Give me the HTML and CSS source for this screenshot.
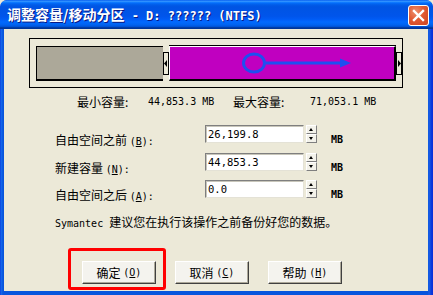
FILE: index.html
```html
<!DOCTYPE html>
<html>
<head>
<meta charset="utf-8">
<link rel="stylesheet" href="styles.css">
</head>
<body>
<div class="win">
  <div class="titlebar">
    <span class="title">调整容量/移动分区<span class="tlat"> - D: ?????? (NTFS)</span></span>
    <div class="close">
      <svg width="13" height="13" viewBox="0 0 13 13"><path d="M2 2 L11 11 M11 2 L2 11" stroke="#fff" stroke-width="2.4" stroke-linecap="square"/></svg>
    </div>
  </div>
  <div class="client">
    <div class="map">
      <div class="bar">
        <div class="free"></div>
        <div class="grip">
          <svg width="6" height="23" viewBox="0 0 6 23"><rect x="0.5" y="0.5" width="5" height="22" fill="#ECE9D8" stroke="#000"/><polygon points="1,11.5 4,8 4,15" fill="#000"/></svg>
        </div>
        <div class="part">
          <svg class="move" width="225" height="32" viewBox="0 0 225 32">
            <ellipse cx="84" cy="16" rx="10.5" ry="9" fill="none" stroke="#1E4FF0" stroke-width="3"/>
            <line x1="96" y1="16" x2="172" y2="16" stroke="#1E4FF0" stroke-width="3"/>
            <polygon points="170,11.5 181,16 170,20.5" fill="#1E4FF0"/>
          </svg>
        </div>
        <div class="grip">
          <svg width="6" height="23" viewBox="0 0 6 23"><rect x="0.5" y="0.5" width="5" height="22" fill="#ECE9D8" stroke="#000"/><polygon points="5,11.5 2,8 2,15" fill="#000"/></svg>
        </div>
      </div>
    </div>

    <div class="sizes">
      <span>最小容量:</span><span class="lat">44,853.3 MB</span>
      <span>最大容量:</span><span class="lat">71,053.1 MB</span>
    </div>

    <div class="form">
      <div class="row">
        <label class="lbl">自由空间之前 <span class="lat">(<u>B</u>):</span></label>
        <div class="field lat">26,199.8</div>
        <div class="spin"><span class="up"></span><span class="down"></span></div>
        <span class="unit lat">MB</span>
      </div>
      <div class="row">
        <label class="lbl">新建容量 <span class="lat">(<u>N</u>):</span></label>
        <div class="field lat">44,853.3</div>
        <div class="spin"><span class="up"></span><span class="down"></span></div>
        <span class="unit lat">MB</span>
      </div>
      <div class="row">
        <label class="lbl">自由空间之后 <span class="lat">(<u>A</u>):</span></label>
        <div class="field lat">0.0</div>
        <div class="spin"><span class="up"></span><span class="down"></span></div>
        <span class="unit lat">MB</span>
      </div>
    </div>

    <p class="note"><span class="lat">Symantec </span>建议您在执行该操作之前备份好您的数据。</p>

    <div class="buttons">
      <div class="btn">确定 <span class="lat">(<u>O</u>)</span></div>
      <div class="btn">取消 <span class="lat">(<u>C</u>)</span></div>
      <div class="btn">帮助 <span class="lat">(<u>H</u>)</span></div>
    </div>

    <div class="highlight"></div>
  </div>
</div>
</body>
</html>
```

FILE: styles.css
```css
* { box-sizing: border-box; }
html, body { margin: 0; padding: 0; }
body {
  width: 433px;
  height: 295px;
  overflow: hidden;
  background: #ECE9D8;
  font-family: "Noto Sans CJK SC", "Liberation Sans", sans-serif;
  font-size: 12px;
  color: #000;
}
.lat {
  font-family: "DejaVu Sans Mono", "Noto Sans CJK SC", monospace;
  font-size: 10px;
}
.win {
  width: 433px;
  height: 295px;
  display: flex;
  flex-direction: column;
  background: linear-gradient(to right, #0831D9 0, #166AEE 1px, #0855DD 3px, #0855DD 428px, #1A5FE6 429px, #0831D9 432px);
  border-radius: 7px 7px 0 0;
  overflow: hidden;
}
.titlebar {
  height: 29px;
  flex: none;
  display: flex;
  align-items: center;
  justify-content: space-between;
  padding: 0 4px 0 7px;
  background: linear-gradient(to bottom, #0058EE 0%, #3593FF 4%, #288EFF 6%, #127DFF 8%, #036FFC 10%, #0262EE 14%, #0057E5 20%, #0054E3 24%, #0055EB 56%, #005BF5 66%, #026AFE 76%, #0062EF 86%, #0052D6 92%, #0040AB 94%, #003092 100%);
  border-radius: 7px 7px 0 0;
}
.title {
  color: #fff;
  font-weight: bold;
  font-size: 14px;
  line-height: 16px;
  text-shadow: 1px 1px 0 #0A1883;
  white-space: pre;
}
.tlat {
  font-family: "DejaVu Sans Mono", monospace;
  font-size: 12px;
  font-weight: bold;
}
.close {
  width: 21px;
  height: 21px;
  margin-top: 1px;
  border: 1px solid #fff;
  border-radius: 3px;
  background: radial-gradient(circle at 35% 30%, #EE906F 0%, #E15A33 45%, #CC4421 100%);
  display: flex;
  align-items: center;
  justify-content: center;
}
.close svg { display: block; }
.client {
  flex: 1;
  margin: 0 5px 4px 4px;
  background: #ECE9D8;
  position: relative;
  overflow: hidden;
}
.map {
  margin: 9px 0 0 25px;
  width: 374px;
  height: 50px;
  border: 1px solid #000;
  padding: 7px 0 0 6px;
}
.bar {
  display: flex;
  align-items: center;
  height: 35px;
}
.free {
  width: 127px;
  height: 35px;
  background: #ACA899;
  border: 1px solid #000;
  border-bottom-width: 2px;
  border-right: none;
}
.grip {
  width: 6px;
  height: 23px;
  flex: none;
}
.grip svg { display: block; }
.part {
  position: relative;
  width: 227px;
  height: 35px;
  background: #C000C0;
  border-top: 1px solid #fff;
  border-left: 1px solid #fff;
  border-bottom: 2px solid #000;
  border-right: 2px solid #000;
  box-shadow: 0 -1px 0 #000;
}
.move {
  position: absolute;
  left: 0;
  top: 0;
}
.sizes {
  margin: 8px 0 0 73px;
  display: grid;
  grid-template-columns: 71px 85px 77px auto;
  line-height: 12px;
  height: 12px;
  align-items: center;
}
.form {
  margin: 17px 0 0 51px;
  display: flex;
  flex-direction: column;
  gap: 9.5px;
}
.row {
  display: flex;
  height: 18px;
  align-items: flex-start;
}
.lbl {
  width: 150px;
  padding-top: 9px;
  line-height: 12px;
  white-space: nowrap;
}
.field {
  width: 99px;
  height: 18px;
  background: #fff;
  border: 1px solid;
  border-color: #7F7F7F #E4E2D6 #E4E2D6 #7F7F7F;
  box-shadow: inset 1px 1px 0 #C8C6BA;
  padding: 0 0 0 2px;
  line-height: 16px;
  font-size: 10.5px;
}
.spin {
  width: 11px;
  height: 18px;
  margin-left: 2px;
  display: flex;
  flex-direction: column;
}
.spin span {
  flex: 1;
  position: relative;
  background: #F3F2EA;
  border: 1px solid;
  border-color: #fff #7F7F7F #7F7F7F #fff;
}
.spin span::after {
  content: "";
  position: absolute;
  left: 2px;
  top: 2px;
  border-left: 2.5px solid transparent;
  border-right: 2.5px solid transparent;
}
.spin .up::after { border-bottom: 3px solid #000; }
.spin .down::after { border-top: 3px solid #000; }
.unit {
  margin-left: 14px;
  padding-top: 9px;
  line-height: 12px;
  font-weight: bold;
}
.note {
  margin: 18px 0 0 51px;
  line-height: 12px;
  white-space: nowrap;
}
.buttons {
  margin: 31px 0 0 78px;
  display: flex;
  gap: 19px;
}
.btn {
  width: 74px;
  height: 23px;
  display: flex;
  align-items: center;
  justify-content: center;
  background: #F4F3EE;
  border: 1px solid;
  border-color: #fff #404040 #404040 #fff;
  box-shadow: inset -1px -1px 0 #ACA899;
  line-height: 12px;
  white-space: pre;
}
.highlight {
  position: absolute;
  left: 64px;
  top: 219px;
  width: 98px;
  height: 42px;
  border: 3px solid #FF0000;
  border-radius: 3px;
}
```
